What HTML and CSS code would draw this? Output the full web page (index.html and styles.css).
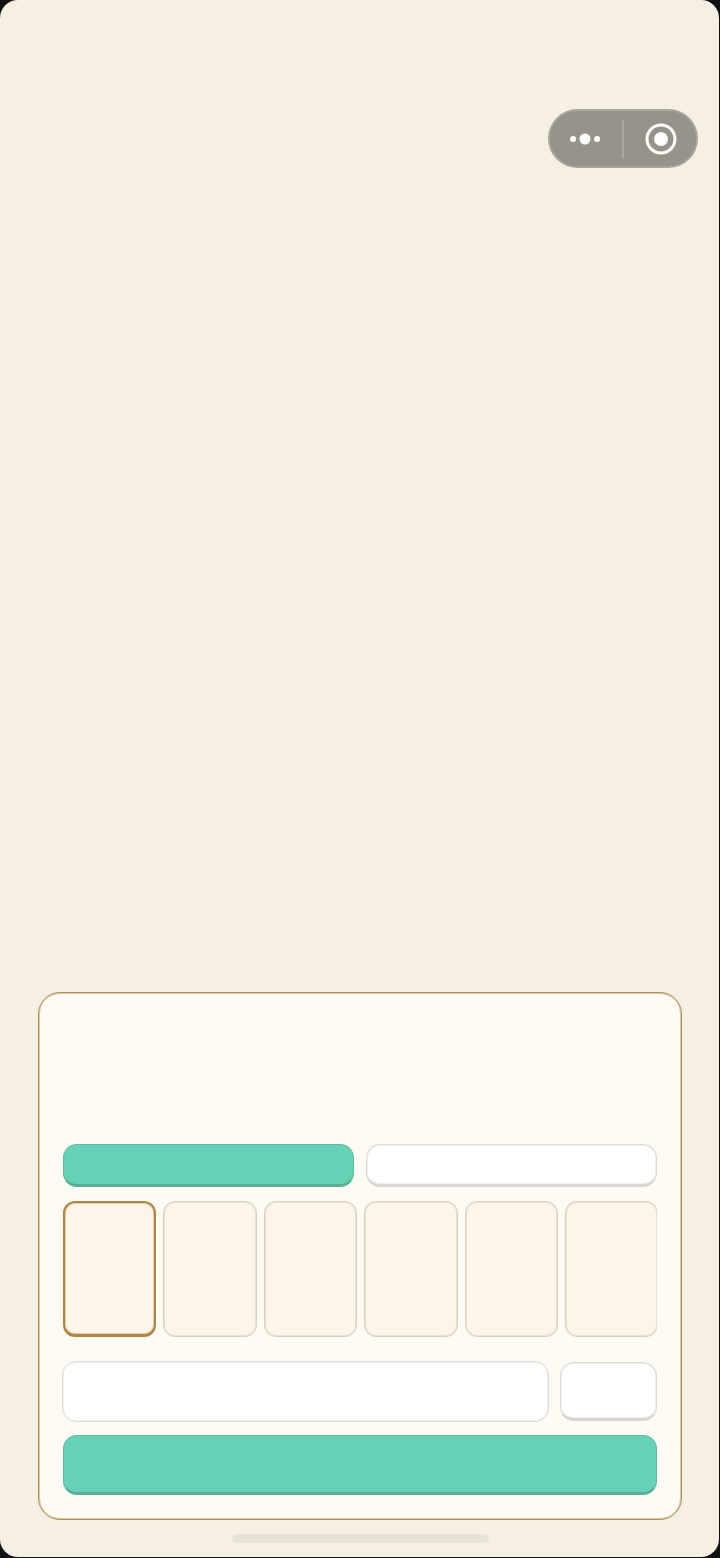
FILE: index.html
```html
<!DOCTYPE html>
<html lang="zh">
<head>
<meta charset="utf-8">
<title>Panel</title>
<link rel="stylesheet" href="styles.css">
</head>
<body>
<div class="screen">
  <div class="capsule">
    <div class="capsule-part capsule-more">
      <svg viewBox="0 0 32 12" width="32" height="12"><circle cx="4" cy="6" r="3" fill="#fff"/><circle cx="16" cy="6" r="5.5" fill="#fff"/><circle cx="28" cy="6" r="3" fill="#fff"/></svg>
    </div>
    <div class="capsule-line"></div>
    <div class="capsule-part capsule-target">
      <svg viewBox="0 0 32 32" width="32" height="32"><circle cx="16" cy="16" r="14" fill="none" stroke="#fff" stroke-width="3"/><circle cx="16" cy="16" r="7" fill="#fff"/></svg>
    </div>
  </div>
  <main class="panel">
    <div class="tabs">
      <div class="btn btn-green"></div>
      <div class="btn btn-white"></div>
    </div>
    <div class="cards">
      <div class="card card-active"></div>
      <div class="card"></div>
      <div class="card"></div>
      <div class="card"></div>
      <div class="card"></div>
      <div class="card"></div>
    </div>
    <div class="input-row">
      <div class="input"></div>
      <div class="btn btn-white btn-small"></div>
    </div>
    <div class="btn btn-green btn-main"></div>
  </main>
  <div class="home-bar"></div>
</div>
</body>
</html>
```
FILE: styles.css
```css
* { box-sizing: border-box; }
html, body { margin: 0; height: 100%; background: #111; }
body { width: 720px; height: 1558px; overflow: hidden; }
.screen {
  position: relative;
  width: 719px;
  height: 1557px;
  background: #f5efe4;
  border-radius: 18px;
  display: flex;
  flex-direction: column;
  justify-content: flex-end;
  align-items: center;
  overflow: hidden;
}
.capsule {
  position: absolute;
  top: 109px;
  left: 548px;
  width: 150px;
  height: 59px;
  border-radius: 30px;
  background: #96948a;
  border: 2px solid #a8a69c;
  display: flex;
  align-items: center;
}
.capsule-part { flex: 1; display: flex; justify-content: center; align-items: center; }
.capsule-more { padding-right: 2px; }
.capsule-target { padding-left: 2px; }
.capsule-line { width: 2px; height: 38px; background: #aaa89e; }
.panel {
  width: 644px;
  height: 528px;
  margin-left: 1px;
  padding: 151px 24px 24px 24px;
  background: #fefbf4;
  border: 1px solid #b08a50;
  border-radius: 22px;
  box-shadow: inset 0 0 0 1px rgba(190, 155, 100, 0.55);
}
.tabs { display: flex; gap: 12px; }
.btn { border-radius: 14px; border-style: solid; border-width: 1px 1px 3px; }
.tabs .btn { flex: 1; height: 43px; }
.btn-green { background: #66d1b4; border-color: #5cbca2 #5cbca2 #58ae97; }
.btn-white {
  background: #fff;
  border-color: #dedcd9 #dedcd9 #d8d6d3;
  box-shadow: inset 0 0 0 1px rgba(226, 224, 221, 0.5);
}
.cards {
  display: flex;
  gap: 6.9px;
  margin-top: 14px;
  overflow: hidden;
}
.card {
  flex: 0 0 93.5px;
  height: 136px;
  background: #fbf5ea;
  border: 1px solid #d9d0bd;
  border-radius: 12px;
  box-shadow: inset 0 0 0 1px rgba(222, 214, 198, 0.6);
}
.card-active {
  flex-basis: 93px;
  margin-right: 0.5px;
  border: 2px solid #ae8643;
  border-bottom-width: 3px;
  box-shadow: inset 0 0 0 1px rgba(174, 134, 67, 0.35);
}
.input-row { display: flex; gap: 11px; margin-top: 24px; margin-left: -1px; }
.input {
  flex: 1;
  height: 61px;
  background: #fff;
  border: 1px solid #dfdcd7;
  border-radius: 14px;
  box-shadow: inset 0 0 0 1px rgba(230, 227, 222, 0.45);
}
.btn-small { flex: 0 0 97px; height: 59px; margin-top: 1px; }
.btn-main { height: 60px; margin-top: 13px; }
.home-bar {
  width: 257px;
  height: 9px;
  margin: 14px 0 14px 1px;
  border-radius: 5px;
  background: #e8e3d9;
}
```
